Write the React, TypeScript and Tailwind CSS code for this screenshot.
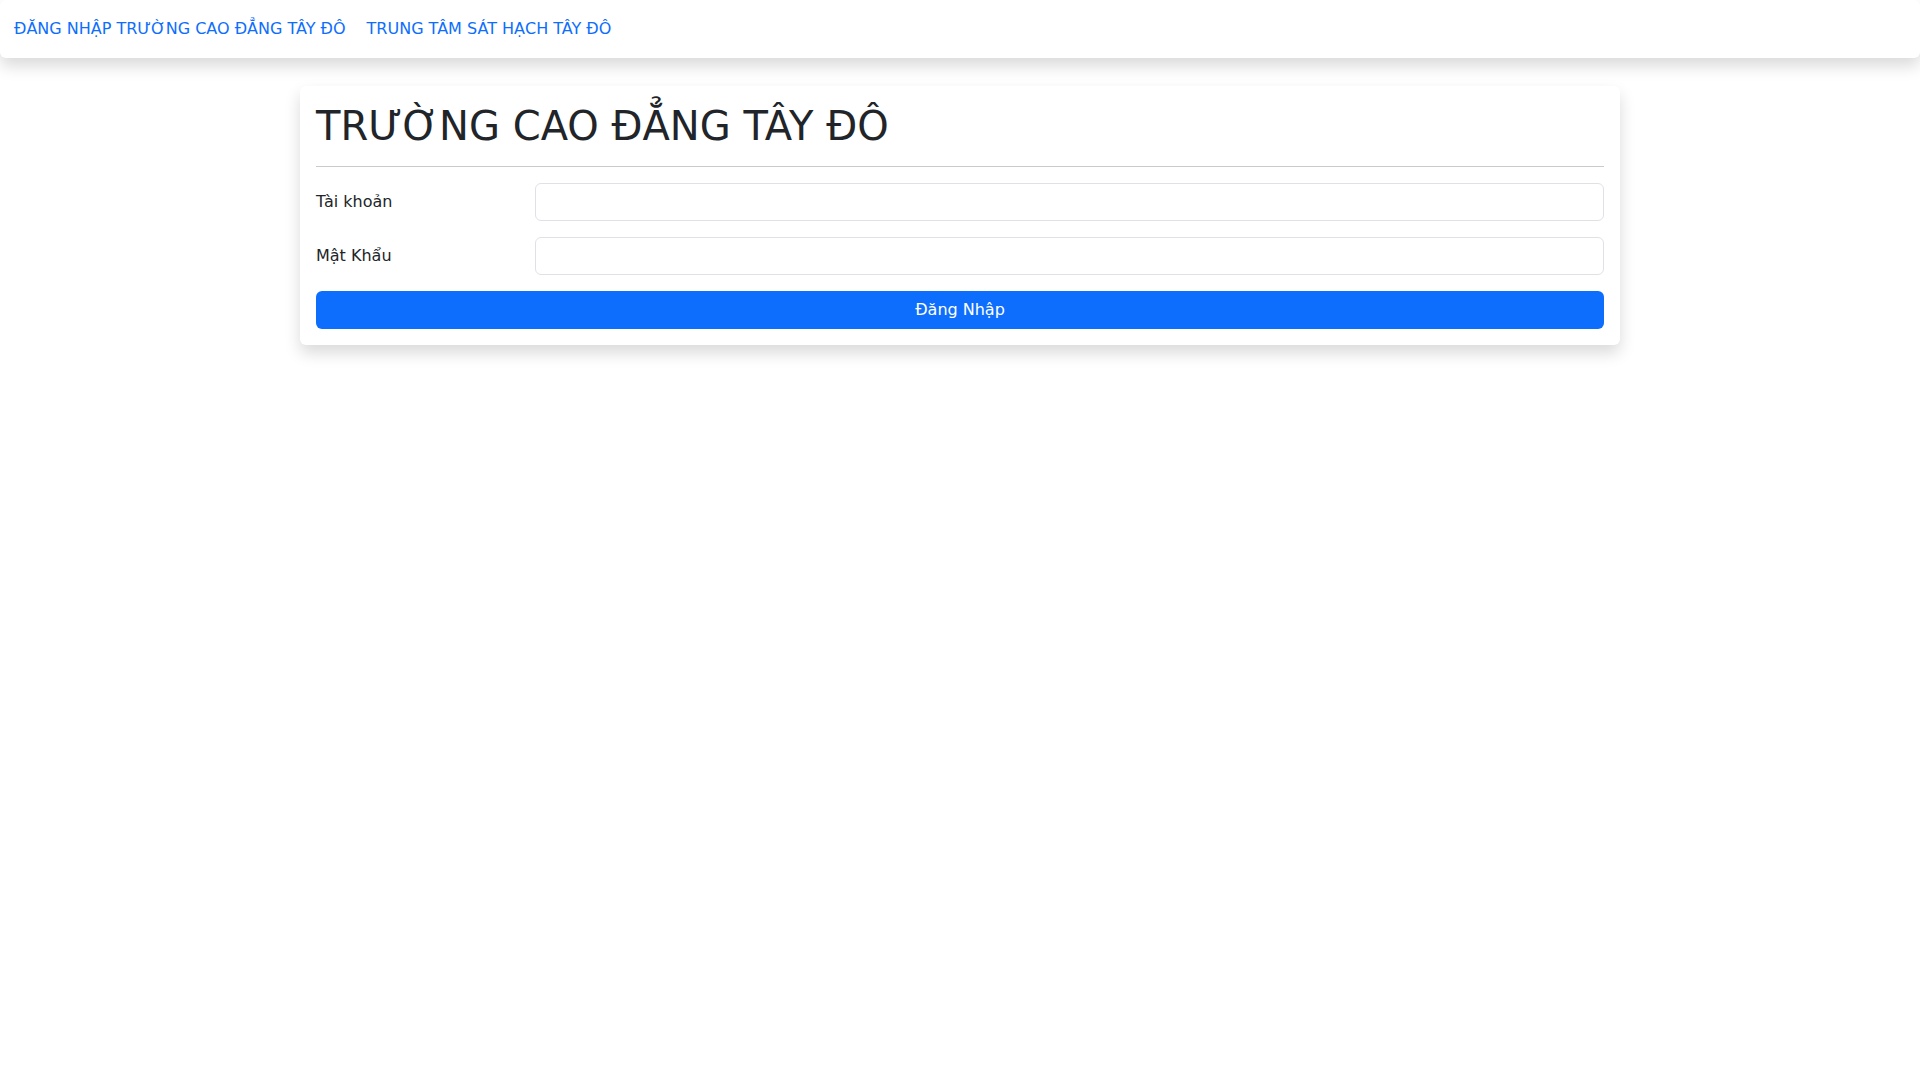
import React from "react";

export default function App() {
  return (
    <div
      className="min-h-screen w-full bg-white text-[#212529]"
      style={{ fontFamily: '"DejaVu Sans", sans-serif' }}
    >
      <nav className="flex h-[58px] items-center rounded-md bg-white px-[14px] shadow-[0_8px_16px_rgba(0,0,0,0.15)]">
        <a className="text-[16px] leading-6 text-[#0d6efd]" href="#">
          ĐĂNG NHẬP TRƯỜNG CAO ĐẲNG TÂY ĐÔ
        </a>
        <a className="ml-[21px] text-[16px] leading-6 text-[#0d6efd]" href="#">
          TRUNG TÂM SÁT HẠCH TÂY ĐÔ
        </a>
      </nav>

      <div className="mx-auto mt-[28px] w-[1320px] rounded-md bg-white p-4 shadow-[0_8px_16px_rgba(0,0,0,0.15)]">
        <h1 className="text-[40px] font-normal leading-[48px]">
          TRƯỜNG CAO ĐẲNG TÂY ĐÔ
        </h1>
        <div className="mt-4 mb-4 h-px bg-[#c9cacb]" />
        <div className="flex items-center">
          <label className="w-[218.67px] shrink-0 text-[16px] leading-6">
            Tài khoản
          </label>
          <input
            type="text"
            className="h-[38px] flex-1 rounded-md border border-[#dee2e6] bg-white px-3 text-[16px] outline-none"
          />
        </div>
        <div className="mt-4 flex items-center">
          <label className="w-[218.67px] shrink-0 text-[16px] leading-6">
            Mật Khẩu
          </label>
          <input
            type="password"
            className="h-[38px] flex-1 rounded-md border border-[#dee2e6] bg-white px-3 text-[16px] outline-none"
          />
        </div>
        <button
          type="button"
          className="mt-4 flex h-[38px] w-full items-center justify-center rounded-md bg-[#0d6efd] text-[16px] leading-6 text-white"
        >
          Đăng Nhập
        </button>
      </div>
    </div>
  );
}
